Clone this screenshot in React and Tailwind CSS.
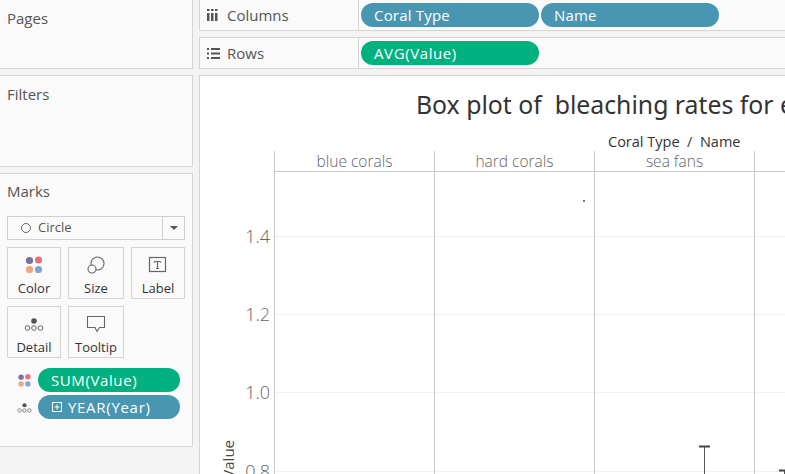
const UI_FONT = { fontFamily: '"Open Sans", "Noto Sans", sans-serif' };

function Pill({ className = '', children }) {
  return (
    <div className={`h-6 rounded-full flex items-center text-white text-[15px] ${className}`}>
      {children}
    </div>
  );
}

function ColorDots({ size = 20 }) {
  return (
    <svg width={size} height={size} viewBox="0 0 20 20">
      <circle cx="5.5" cy="5.5" r="3.6" fill="#7b6f9c" />
      <circle cx="14.5" cy="5" r="3.6" fill="#e8707c" />
      <circle cx="5.5" cy="14.5" r="3.6" fill="#eba883" />
      <circle cx="14.5" cy="14.5" r="3.6" fill="#7fa8cc" />
    </svg>
  );
}

function DetailDots({ size = 20 }) {
  return (
    <svg width={size} height={size} viewBox="0 0 20 20" fill="none" stroke="#666" strokeWidth="1">
      <circle cx="10" cy="7" r="2.8" fill="#555" stroke="none" />
      <circle cx="3.5" cy="14" r="2.3" />
      <circle cx="10" cy="14" r="2.3" />
      <circle cx="16.5" cy="14" r="2.3" />
    </svg>
  );
}

function SizeIcon() {
  return (
    <svg width="20" height="20" viewBox="0 0 20 20" fill="none" stroke="#666" strokeWidth="1.1">
      <circle cx="11.5" cy="8.5" r="6.5" />
      <circle cx="6" cy="14" r="4" fill="#fafafa" />
    </svg>
  );
}

function LabelIcon() {
  return (
    <svg width="20" height="18" viewBox="0 0 20 18" fill="none">
      <rect x="1.5" y="1.5" width="16" height="14" stroke="#666" strokeWidth="1.2" />
      <path d="M6.5 5.5h6M9.5 5.5v7M8 12.5h3M6.5 5.5v1.3M12.5 5.5v1.3" stroke="#666" strokeWidth="1.2" />
    </svg>
  );
}

function TooltipIcon() {
  return (
    <svg width="20" height="18" viewBox="0 0 20 18" fill="none">
      <path d="M1.5 1.5h17v11h-5l-2.5 4-2-4h-7.500z" stroke="#666" strokeWidth="1.1" />
    </svg>
  );
}

function MarkButton({ label, className = 'w-[54px]', icon }) {
  return (
    <div className={`h-[52px] bg-[#fafafa] border border-[#d4d4d4] flex flex-col items-center justify-between pt-[7px] ${className}`}>
      <div className="h-5 flex items-center">{icon}</div>
      <span className="text-[13px] leading-[20px] text-[#333]">{label}</span>
    </div>
  );
}

function Sidebar() {
  return (
    <div className="w-[193px] shrink-0 flex flex-col gap-[6px]">
      <div className="h-[69px] bg-[#fafafa] border-b border-r border-[#d4d4d4] pl-[7px] pt-[7px] text-[15px] text-[#555]">Pages</div>
      <div className="h-[92px] bg-[#fafafa] border-y border-r border-[#d4d4d4] pl-[7px] pt-[7px] text-[15px] text-[#555]">Filters</div>
      <div className="h-[274px] bg-[#fafafa] border-y border-r border-[#d4d4d4] pl-[7px] pt-[7px]">
        <div className="text-[15px] text-[#555] leading-[20px]">Marks</div>
        <div className="mt-[15px] w-[178px] h-[24px] border border-[#cfcfcf] flex items-center text-[13px] text-[#555]">
          <span className="w-[14px] h-[11px] ml-[13px] flex items-center">
            <span className="block w-[10px] h-[10px] rounded-full border border-[#666]" />
          </span>
          <span className="ml-[3px] flex-1">Circle</span>
          <span className="w-[22px] h-full border-l border-[#cfcfcf] flex items-center justify-center">
            <span className="block w-0 h-0 border-x-[4px] border-x-transparent border-t-[4px] border-t-[#555]" />
          </span>
        </div>
        <div className="mt-[7px] flex gap-[7px]">
          <MarkButton label="Color" icon={<ColorDots />} />
          <MarkButton label="Size" className="w-[56px]" icon={<SizeIcon />} />
          <MarkButton label="Label" icon={<LabelIcon />} />
        </div>
        <div className="mt-[7px] flex gap-[7px]">
          <MarkButton label="Detail" icon={<DetailDots />} />
          <MarkButton label="Tooltip" className="w-[56px]" icon={<TooltipIcon />} />
        </div>
        <div className="mt-[10px] flex items-center">
          <div className="w-[31px] pl-[10px]"><ColorDots size={15} /></div>
          <Pill className="w-[142px] bg-[#00b180] pl-[13px] tracking-[0.6px]">SUM(Value)</Pill>
        </div>
        <div className="mt-[3px] flex items-center">
          <div className="w-[31px] pl-[10px]"><DetailDots size={15} /></div>
          <Pill className="w-[142px] bg-[#4996b2] pl-[14px] tracking-[0.7px]">
            <svg width="10" height="10" viewBox="0 0 10 10" fill="none" stroke="#fff" className="mr-[6px]">
              <rect x="0.5" y="0.5" width="9" height="9" />
              <path d="M2.500 5h5M5 2.500v5" />
            </svg>
            YEAR(Year)
          </Pill>
        </div>
      </div>
    </div>
  );
}

function Shelf({ label, icon, className = '', children }) {
  return (
    <div className={`bg-[#fafafa] border-b border-l border-[#d4d4d4] flex ${className}`}>
      <div className="w-[159px] shrink-0 border-r border-[#d4d4d4] flex items-center pl-[7px] text-[15px] text-[#555]">
        <span className="w-[20px] flex items-center">{icon}</span>
        {label}
      </div>
      <div className="flex items-center gap-[2px] pl-[2px]">{children}</div>
    </div>
  );
}

function Plot() {
  const ticks = [
    { y: 64, label: '1.4' },
    { y: 142, label: '1.2' },
    { y: 220, label: '1.0' },
    { y: 299, label: '0.8' },
  ];
  return (
    <svg width="585" height="302" viewBox="0 0 585 302" className="block" style={{ fontFamily: '"Open Sans", sans-serif' }}>
      {ticks.map(t => (
        <g key={t.label}>
          <line x1="75" x2="585" y1={t.y + 0.5} y2={t.y + 0.5} stroke="#f0f0f0" />
          <text x="70" y={t.y + 7} textAnchor="end" fontSize="18" fontWeight="300" fill="#666">{t.label}</text>
        </g>
      ))}
      {[74.5, 234.5, 394.5, 554.5].map(x => (
        <line key={x} x1={x} x2={x} y1="0" y2="302" stroke="#c8c8c8" />
      ))}
      <rect x="383" y="28" width="2" height="2" fill="#777" />
      <line x1="504.500" x2="504.500" y1="274" y2="302" stroke="#555" />
      <line x1="499" x2="510" y1="274.500" y2="274.500" stroke="#444" strokeWidth="2" />
      <line x1="584.500" x2="584.500" y1="298" y2="302" stroke="#555" />
      <line x1="579" x2="585" y1="298.500" y2="298.500" stroke="#444" strokeWidth="2" />
      <text transform="translate(34 268) rotate(-90)" textAnchor="end" fontSize="15" fill="#444" fontWeight="500">Value</text>
    </svg>
  );
}

function Chart() {
  return (
    <div className="flex-1 min-h-0 bg-white border-t border-l border-[#d4d4d4] overflow-hidden">
      <div className="pl-[216px] pt-[11px] h-[46px] text-[24.8px] leading-[34px] text-[#333] whitespace-pre" style={{ fontFamily: '"Noto Sans", sans-serif' }}>
        Box plot of  bleaching rates for each
      </div>
      <div className="pl-[408px] h-[20px] pt-[10px] text-[14.5px] leading-[20px] text-[#333] whitespace-pre font-medium">Coral Type  /  Name</div>
      <div className="ml-[74px] mt-[9px] h-[21px] flex border-b border-[#c8c8c8] text-[15.5px] leading-[21px] font-light text-[#666] w-[511px]">
        {['blue corals', 'hard corals', 'sea fans'].map(h => (
          <div key={h} className="w-[160px] shrink-0 border-l border-[#c8c8c8] text-center">{h}</div>
        ))}
        <div className="flex-1 border-l border-[#c8c8c8]" />
      </div>
      <Plot />
    </div>
  );
}

export default function App() {
  return (
    <div className="w-[785px] h-[474px] overflow-hidden bg-[#f3f3f3] flex gap-[6px]" style={UI_FONT}>
      <Sidebar />
      <div className="flex-1 min-w-0 flex flex-col gap-[6px]">
        <Shelf
          label="Columns"
          className="h-[31px]"
          icon={
            <svg width="11" height="12" viewBox="0 0 11 12" fill="#555">
              <path d="M0 4h2.500v8H0zM4 4h2.500v8H4zM8 4h2.500v8H8zM0 0h2.500v2H0zM4 0h2.500v2H4zM8 0h2.500v2H8z" />
            </svg>
          }
        >
          <Pill className="w-[178px] bg-[#4996b2] pl-[13px] tracking-[0.2px]">Coral Type</Pill>
          <Pill className="w-[178px] bg-[#4996b2] pl-[13px] tracking-[0.2px]">Name</Pill>
        </Shelf>
        <Shelf
          label="Rows"
          className="h-[32px] border-t"
          icon={
            <svg width="13" height="11" viewBox="0 0 13 11" fill="#555">
              <path d="M0 0h2v2H0zM4 0h9v2H4zM0 4.500h2v2H0zM4 4.500h9v2H4zM0 9h2v2H0zM4 9h9v2H4z" />
            </svg>
          }
        >
          <Pill className="w-[178px] bg-[#00b180] pl-[13px] tracking-[0.6px]">AVG(Value)</Pill>
        </Shelf>
        <Chart />
      </div>
    </div>
  );
}
